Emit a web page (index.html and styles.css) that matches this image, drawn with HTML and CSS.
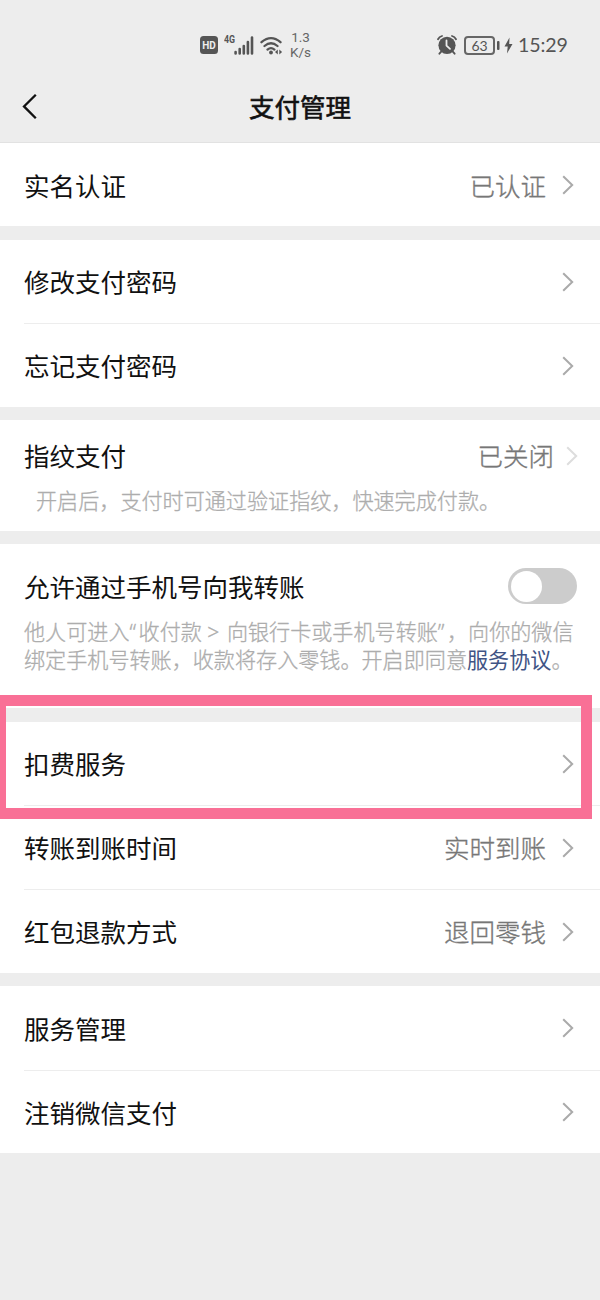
FILE: index.html
```html
<!DOCTYPE html>
<html lang="zh-CN">
<head>
<meta charset="utf-8">
<title>支付管理</title>
<link rel="stylesheet" href="styles.css">
</head>
<body>
<svg class="defs" width="0" height="0">
  <symbol id="chevron" viewBox="0 0 12 20"><path d="M1.2 1.2 10.2 10 1.2 18.8"/></symbol>
</svg>
<div class="screen">
  <div class="status">
    <svg class="hd" width="18" height="18" viewBox="0 0 18 18"><rect width="18" height="18" rx="3.5" fill="#555"/><text x="9" y="12.8" text-anchor="middle">HD</text></svg>
    <span class="net">4G</span>
    <svg class="signal" width="20" height="19" viewBox="0 0 20 19"><path d="M1.6 16v1.400M5.700 13v4.400M9.800 10v7.400M13.900 6v11.400M18 1.600v15.800"/></svg>
    <svg class="wifi" width="23" height="19" viewBox="0 0 23 19"><path d="M1.500 6.200Q11 -2 20.500 6.200M4.500 10Q11 4.400 17.500 10M7.500 13.600Q11 10.600 14.400 13.600"/><circle cx="11" cy="16.500" r="1.900"/><path class="solid" d="m17.800 13.500v5l-2.800-2.500zM19.300 13.500v5l2.800-2.500z"/></svg>
    <span class="speed">1.3<br>K/s</span>
    <svg class="alarm" width="20" height="20" viewBox="0 0 20 20"><circle cx="10" cy="10.300" r="8.600" fill="#555"/><path d="M1 4.200Q2.300 1.800 5 1M15 1q2.700.8 4 3.200M4.400 16.300l-2 2.400M15.600 16.300l2 2.400" stroke="#555" stroke-width="1.800"/><path d="M9.500 5.500v5.200l3.500 3.100" stroke="#ededed" stroke-width="1.800"/></svg>
    <div class="battery"><span>63</span></div>
    <svg class="nub" width="3" height="9" viewBox="0 0 3 9"><rect width="2.500" height="9" rx="1" fill="#555"/></svg>
    <svg class="bolt" width="9" height="17" viewBox="0 0 9 17"><path d="M5.500.5.500 9.500h3.200L3 16.500 8.500 7H5.200z" fill="#555"/></svg>
    <span class="time">15:29</span>
  </div>
  <header class="nav">
    <svg class="back" width="16" height="27" viewBox="0 0 16 27"><path d="M13.800 1.700 2 13.400 13.800 25.200"/></svg>
    <h1>支付管理</h1>
  </header>

  <main>
    <section class="group verify">
      <div class="row"><span>实名认证</span><span class="value">已认证</span><svg class="chev"><use href="#chevron"/></svg></div>
    </section>
    <section class="group">
      <div class="row short"><span>修改支付密码</span><svg class="chev"><use href="#chevron"/></svg></div>
      <div class="row"><span>忘记支付密码</span><svg class="chev"><use href="#chevron"/></svg></div>
    </section>
    <section class="group finger">
      <div class="row"><span>指纹支付</span><span class="value">已关闭</span><svg class="chev faint"><use href="#chevron"/></svg></div>
      <p class="note">开启后，支付时可通过验证指纹，快速完成付款。</p>
    </section>
    <section class="group transfer">
      <div class="row"><span>允许通过手机号向我转账</span><span class="toggle"></span></div>
      <p class="note">他人可进入<span class="quote">“</span>收付款<span class="sep"> &gt; </span>向银行卡或手机号转账<span class="quote">”</span>，向你的微信<br>绑定手机号转账，收款将存入零钱。开启即同意<a class="link">服务协议</a>。</p>
    </section>
    <section class="group">
      <div class="row short"><span>扣费服务</span><svg class="chev"><use href="#chevron"/></svg></div>
      <div class="row"><span>转账到账时间</span><span class="value">实时到账</span><svg class="chev"><use href="#chevron"/></svg></div>
      <div class="row"><span>红包退款方式</span><span class="value">退回零钱</span><svg class="chev"><use href="#chevron"/></svg></div>
      <div class="highlight"></div>
    </section>
    <section class="group last">
      <div class="row"><span>服务管理</span><svg class="chev"><use href="#chevron"/></svg></div>
      <div class="row short"><span>注销微信支付</span><svg class="chev"><use href="#chevron"/></svg></div>
    </section>
  </main>
</div>
</body>
</html>
```
FILE: styles.css
```css
* { box-sizing: border-box; }
body {
  margin: 0;
  background: #ededed;
  color: #111;
  font-family: "Noto Sans", "Noto Sans CJK SC", sans-serif;
}
.defs { position: absolute; }
.screen { width: 600px; height: 1300px; overflow: hidden; }
.status {
  height: 72px;
  padding: 18px 32px 0 200px;
  display: flex;
  align-items: center;
  color: #555;
  font-family: Roboto, sans-serif;
}
.status svg { flex: none; fill: none; stroke-linecap: round; }
.hd text { font: bold 10px Roboto, sans-serif; fill: #ededed; }
.net { width: 12px; margin: -11px 0 0 6px; font: bold 11px/11px Roboto, sans-serif; transform: scaleX(.8); transform-origin: left; }
.signal { margin-left: -2px; stroke: #555; stroke-width: 2.6; }
.wifi { margin-left: 6px; stroke: #555; stroke-width: 2.3; }
.wifi circle, .wifi .solid { fill: #555; stroke: none; }
.speed { margin-left: 7px; font-size: 13.5px; line-height: 15px; text-align: center; color: #666; }
.alarm { margin-left: auto; }
.battery {
  width: 31px;
  height: 19px;
  margin-left: 7px;
  border: 2px solid #666;
  border-radius: 4px;
  display: flex;
  align-items: center;
  justify-content: center;
  font: 14px/15px Lato, sans-serif;
}
.nub { margin-left: 2px; }
.bolt { margin-left: 4px; }
.time { width: 50px; margin-left: 5px; font: 19.6px/24px Lato, sans-serif; letter-spacing: -.15px; white-space: nowrap; }
.nav {
  height: 71px;
  display: grid;
  grid-template-columns: 60px 1fr 60px;
  align-items: center;
  border-bottom: 1px solid #e2e2e2;
}
.back { margin: -2px 0 0 22px; fill: none; stroke: #111; stroke-width: 2.3; }
.nav h1 { margin: 0; font-size: 25.5px; font-weight: 400; line-height: 36px; text-align: center; -webkit-text-stroke: .6px #111; }
.group { position: relative; margin-bottom: 13px; padding-left: 24px; background: #fff; }
.row {
  height: 84px;
  padding: 1px 26px 0 0;
  display: flex;
  align-items: center;
  font-size: 25.5px;
  line-height: 36px;
  white-space: nowrap;
}
.row.short { height: 83px; }
.row + .row { border-top: 1px solid #ededed; }
.verify { margin-bottom: 14px; }
.verify .row { height: 83px; padding-top: 3px; }
.verify .chev { margin-top: -3px; }
.value { margin-left: auto; color: #777; font-weight: 300; -webkit-text-stroke: .35px #777; }
.chev { flex: none; width: 12px; height: 20px; margin: -1px 0 0 auto; fill: none; stroke: #aaa; stroke-width: 2; }
.value + .chev { margin-left: 16px; }
.note { margin: 0; color: #adadad; font-size: 21.1px; font-weight: 300; line-height: 28px; white-space: nowrap; -webkit-text-stroke: .3px #adadad; }
.finger { height: 111px; }
.finger .row { height: 71px; padding-right: 22px; }
.finger .value + .chev { margin-left: 12px; stroke: #ddd; }
.finger .note { padding-left: 12px; margin-top: -4px; }
.transfer { height: 164px; margin-bottom: 14px; }
.transfer .row { height: 85px; padding-right: 23px; }
.transfer .note { margin-top: -11px; }
.quote { margin-right: 2.5px; }
.sep { margin-right: 2px; }
.toggle { width: 69px; height: 36px; margin: -2px 0 0 auto; padding: 2.5px; border-radius: 18px; background: #ccc; }
.toggle::before { content: ""; display: block; width: 31px; height: 31px; border-radius: 50%; background: #fff; }
.link { color: #3f5485; font-weight: 400; -webkit-text-stroke: 0; }
.highlight { position: absolute; left: -5px; top: -27px; width: 597px; height: 124px; border: 11px solid #f97096; }
.last { margin-bottom: 0; }
```
